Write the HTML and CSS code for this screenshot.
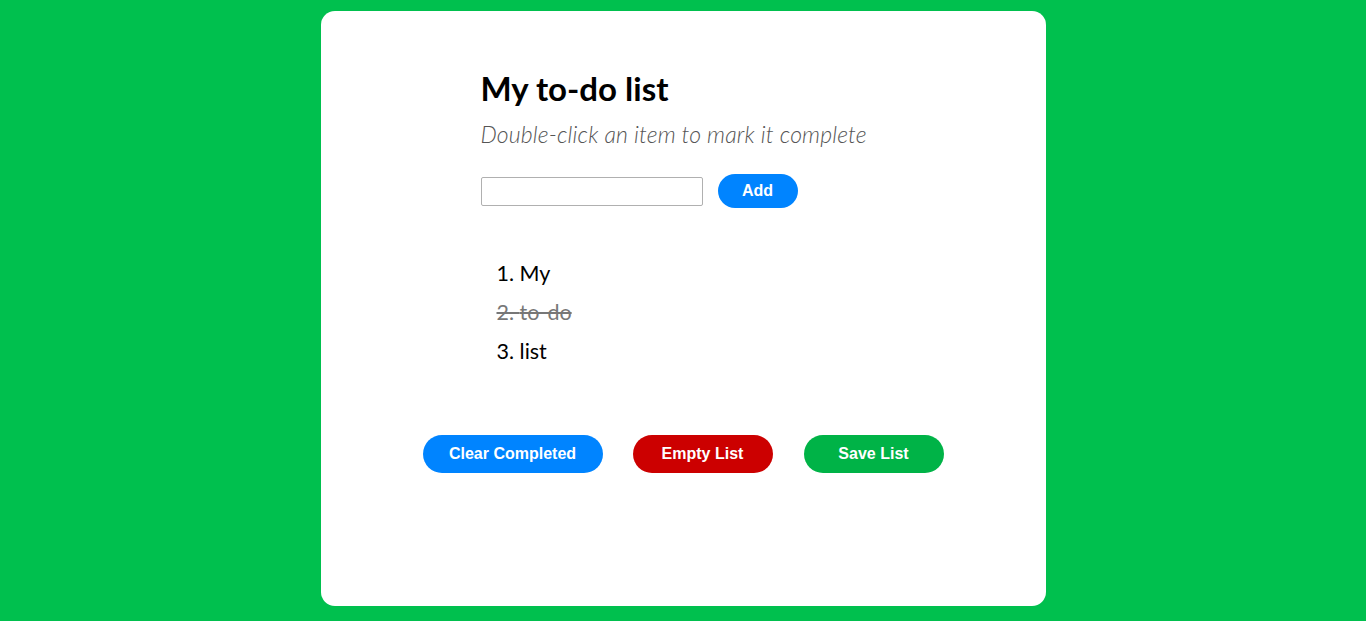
FILE: index.html
```html
<!DOCTYPE html>
<html>
<head>
<meta charset="utf-8">
<link rel="stylesheet" href="styles.css">
</head>
<body>
<main class="card">
  <section class="content">
    <h1 class="title">My to-do list</h1>
    <p class="subtitle">Double-click an item to mark it complete</p>
    <form class="add-row">
      <input class="add-input" type="text">
      <button class="btn btn-blue btn-add" type="button">Add</button>
    </form>
    <ol class="list">
      <li>My</li>
      <li class="done">to-do</li>
      <li>list</li>
    </ol>
  </section>
  <div class="actions">
    <button class="btn btn-blue btn-wide" type="button">Clear Completed</button>
    <button class="btn btn-red" type="button">Empty List</button>
    <button class="btn btn-green" type="button">Save List</button>
  </div>
</main>
</body>
</html>
```
FILE: styles.css
```css
html, body {
  margin: 0;
  padding: 0;
}
body {
  background: #00c04e;
  height: 621px;
  padding-top: 11px;
  box-sizing: border-box;
  font-family: "Lato", "Open Sans", sans-serif;
}
.card {
  width: 725px;
  height: 595px;
  margin: 0 auto;
  background: #ffffff;
  border-radius: 14px;
  box-sizing: border-box;
  padding: 58px 0 0 160px;
}
.content {
  display: flex;
  flex-direction: column;
  align-items: flex-start;
}
.title {
  margin: 0;
  font-size: 33px;
  font-weight: 700;
  line-height: 38px;
  color: #000;
}
.subtitle {
  margin: 12px 0 0 0;
  font-size: 23px;
  letter-spacing: 0.15px;
  font-style: italic;
  font-weight: 300;
  line-height: 30px;
  color: #555;
}
.add-row {
  display: flex;
  align-items: center;
  gap: 15px;
  margin-top: 25px;
}
.add-input {
  width: 222px;
  height: 29px;
  box-sizing: border-box;
  border: 1px solid #b0b0b0;
  border-radius: 2px;
  margin: 0;
  padding: 2px 4px;
}
.btn {
  border: none;
  color: #fff;
  font-family: "Liberation Sans", Arial, sans-serif;
  font-weight: 700;
  font-size: 16px;
  height: 38px;
  width: 140px;
  border-radius: 19px;
  padding: 0;
}
.btn-add {
  width: 80px;
  height: 34px;
  border-radius: 17px;
}
.btn-blue { background: #0084ff; }
.btn-red { background: #cc0000; }
.btn-green { background: #00b347; }
.btn-wide { width: 180px; }
.list {
  margin: 46px 0 0 0;
  padding: 0 0 0 16px;
  font-size: 21.5px;
  line-height: 39px;
  color: #000;
  list-style: none;
  counter-reset: item;
}
.list li {
  counter-increment: item;
}
.list li::before {
  content: counter(item) ". ";
}
.list li.done {
  color: #777;
  text-decoration: line-through;
}
.actions {
  display: flex;
  gap: 30px;
  margin: 64px 0 0 -58px;
}
.actions .btn-green { margin-left: 1px; }
```
